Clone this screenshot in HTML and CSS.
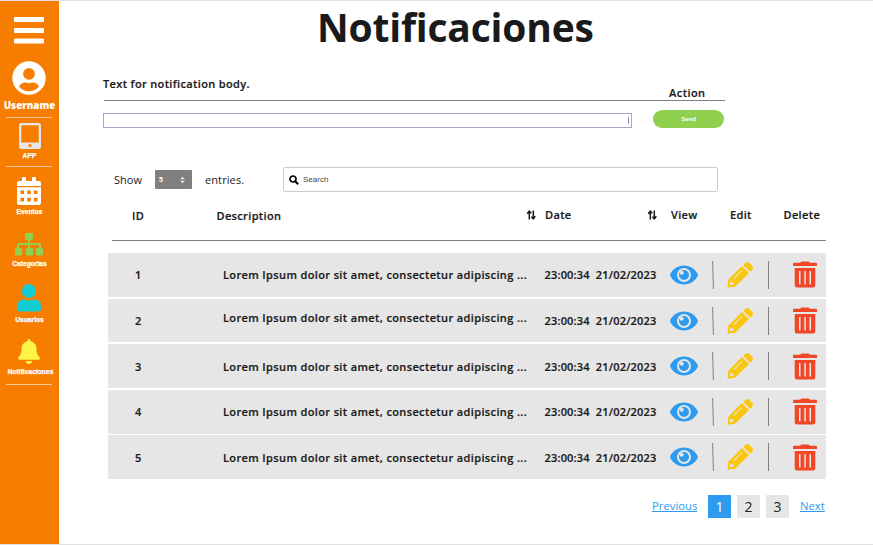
FILE: index.html
```html
<!DOCTYPE html>
<html lang="es">
<head>
<meta charset="utf-8">
<title>Notificaciones</title>
<link rel="stylesheet" href="styles.css">
</head>
<body>
<svg class="defs" width="0" height="0">
  <symbol id="eye" viewBox="0 0 28 20"><path fill="#2d9bf0" d="M14 .4C7.500 .4 2.500 4.500 .4 8.800a2.400 2.400 0 0 0 0 2.300C2.500 15.500 7.500 19.600 14 19.600s11.500-4.100 13.600-8.500a2.400 2.400 0 0 0 0-2.300C25.500 4.500 20.500 .4 14 .4z"/><circle cx="14" cy="10" r="6" fill="#2d9bf0" stroke="#e6e6e6" stroke-width="2"/><circle cx="11.800" cy="7.800" r="2" fill="#e6e6e6"/></symbol>
  <symbol id="pencil" viewBox="0 0 26 26"><path fill="#fac710" fill-rule="evenodd" d="M14.900 4 22 11.100 8.100 24.800.5 25.800 1.300 17.700zM16.300 2.900l1.900-1.900c1.200-1.200 3-1.200 4.200 0l2.700 2.700c1.200 1.200 1.200 3 0 4.200l-1.900 1.900zM3.500 19.300l-.8 4 3.900-.7v-2h-2zM7.100 16.900l8.300-8.300-.7-.7-8.300 8.300z"/></symbol>
  <symbol id="trash" viewBox="0 0 24 27"><path fill="#f24726" fill-rule="evenodd" d="M1 1.700h6L8.500.5h7L17 1.700h6a1 1 0 0 1 1 1v2.200H0V2.700a1 1 0 0 1 1-1zM1.700 7h20.600v17a2.500 2.500 0 0 1-2.500 2.500H4.200A2.500 2.500 0 0 1 1.700 24zM6 10v13.500h1.500V10zm5.300 0v13.500h1.500V10zm5.200 0v13.500H18V10z"/></symbol>
  <symbol id="sort" viewBox="0 0 10 10"><path d="M3.300 9.500V1.500M1.200 3.700 3.300 1.200 5.300 3.300M7.300 .5v8M5.300 6.700l2 2.100 2-2.500" fill="none" stroke="#1a1a1a" stroke-width="1.500"/></symbol>
</svg>
<div class="app">
  <nav class="sidebar">
    <svg class="menu" viewBox="0 0 30 27"><path fill="#fff" d="M1 0h28a1 1 0 0 1 1 1v3a1 1 0 0 1-1 1H1a1 1 0 0 1-1-1V1a1 1 0 0 1 1-1zM1 11h28a1 1 0 0 1 1 1v3a1 1 0 0 1-1 1H1a1 1 0 0 1-1-1v-3a1 1 0 0 1 1-1zM1 21.500h28a1 1 0 0 1 1 1v3a1 1 0 0 1-1 1H1a1 1 0 0 1-1-1v-3a1 1 0 0 1 1-1z"/></svg>
    <svg class="avatar" viewBox="0 0 34 34"><circle cx="17" cy="17" r="16.700" fill="#fff"/><circle cx="17" cy="12.900" r="5.900" fill="#f77d00"/><path fill="#f77d00" d="M6.900 25.500c1.700-2.600 3.800-4 6.200-4 1.500 0 2.200.7 3.900.7s2.400-.7 3.900-.7c2.400 0 4.500 1.400 6.200 4-2.500 3.100-6 4.800-10.100 4.800s-7.600-1.700-10.100-4.800z"/></svg>
    <span class="username">Username</span>
    <hr class="rule">
    <a class="item app-item"><svg viewBox="0 0 22 26" width="22" height="26"><path fill="#e6e6e6" fill-rule="evenodd" d="M2.500 0h17A2.500 2.500 0 0 1 22 2.500v21a2.500 2.500 0 0 1-2.500 2.500h-17A2.500 2.500 0 0 1 0 23.500v-21A2.500 2.500 0 0 1 2.500 0zM2.300 2.300v17.200h17.400V2.300zM11 21a1.600 1.600 0 1 0 0 3.200 1.600 1.600 0 0 0 0-3.200z"/></svg><span>APP</span></a>
    <hr class="rule">
    <a class="item events"><svg viewBox="0 0 24 28" width="24" height="28"><path fill="#fff" fill-rule="evenodd" d="M5 1a1 1 0 0 1 1-1h2a1 1 0 0 1 1 1v3h6V1a1 1 0 0 1 1-1h2a1 1 0 0 1 1 1v3h3a2 2 0 0 1 2 2v3H0V6a2 2 0 0 1 2-2h3zM0 10.200h24V26a2 2 0 0 1-2 2H2a2 2 0 0 1-2-2zM3.500 13.500v3.600h3.600v-3.600zm6.700 0v3.600h3.600v-3.600zm6.700 0v3.600h3.600v-3.600zM3.500 20.800v3.600h3.600v-3.600zm6.700 0v3.600h3.600v-3.600zm6.700 0v3.600h3.600v-3.600z"/></svg><span>Eventos</span></a>
    <a class="item cats"><svg viewBox="0 0 28 23" width="28" height="23"><path fill="#8fd14f" d="M11 0h6a1 1 0 0 1 1 1v5a1 1 0 0 1-1 1h-2v3h9.500a1.500 1.500 0 0 1 1.500 1.500V15h1a1 1 0 0 1 1 1v5.500a1 1 0 0 1-1 1h-5a1 1 0 0 1-1-1V16a1 1 0 0 1 1-1h2v-3h-9v3h2a1 1 0 0 1 1 1v5.500a1 1 0 0 1-1 1h-5a1 1 0 0 1-1-1V16a1 1 0 0 1 1-1h1v-3H4v3h2a1 1 0 0 1 1 1v5.500a1 1 0 0 1-1 1H1a1 1 0 0 1-1-1V16a1 1 0 0 1 1-1h1v-3.500A1.500 1.500 0 0 1 3.500 10H13V7h-2a1 1 0 0 1-1-1V1a1 1 0 0 1 1-1z"/></svg><span>Categorias</span></a>
    <a class="item users"><svg viewBox="0 0 24 28" width="24" height="28"><circle cx="12" cy="7" r="7" fill="#12cdd4"/><path fill="#12cdd4" d="M6 15.500c2 0 3.500 1 6 1s4-1 6-1c4 0 6 3.500 6 7.500v1.500a3 3 0 0 1-3 3H3a3 3 0 0 1-3-3V23c0-4 2-7.500 6-7.500z"/></svg><span>Usuarios</span></a>
    <a class="item notif"><svg viewBox="0 0 22 25" width="22" height="25"><path fill="#fef445" d="M11 0c1 0 1.500.7 1.500 1.500v.8c3.500.7 6 3.500 6 7.500 0 4.500 1.200 6.500 2.900 8.200 1 1 .5 2.700-1 2.700H1.600c-1.500 0-2-1.700-1-2.700 1.700-1.700 2.900-3.700 2.900-8.200 0-4 2.500-6.800 6-7.500v-.8C9.500.7 10 0 11 0zM8 22h6a3 3 0 0 1-6 0z"/></svg><span>Notificaciones</span></a>
    <hr class="rule">
  </nav>
  <main class="main">
    <h1>Notificaciones</h1>
    <div class="compose-head"><span class="body-label">Text for notification body.</span><span class="action-label">Action</span></div>
    <div class="compose"><div class="input"><i></i></div><button class="send">Send</button></div>
    <div class="filters">
      <span class="show">Show</span>
      <div class="select"><span>5</span><svg viewBox="0 0 6 8" width="5" height="8"><path fill="#e6e6e6" d="M3 0l2.800 3.200H.2zM3 8L.2 4.800h5.600z"/></svg></div>
      <span class="entries">entries.</span>
      <div class="search"><svg viewBox="0 0 10 10" width="10" height="10"><circle cx="4" cy="4" r="3" fill="none" stroke="#000" stroke-width="1.700"/><path d="M6.200 6.200 9.200 9.200" stroke="#000" stroke-width="2"/></svg><span>Search</span></div>
    </div>
    <div class="thead">
      <span class="h-id">ID</span><span class="h-desc">Description</span><svg class="sort"><use href="#sort"/></svg><span class="h-date">Date</span><svg class="sort"><use href="#sort"/></svg><span class="h-view">View</span><span class="h-edit">Edit</span><span class="h-del">Delete</span>
    </div>
    <div class="rows">
      <div class="row"><span class="id">1</span><span class="desc">Lorem Ipsum dolor sit amet, consectetur adipiscing ...</span><span class="date">23:00:34&nbsp; 21/02/2023</span><svg class="eye"><use href="#eye"/></svg><svg class="sep" viewBox="0 0 2 28"><path d="M.6 0 1.400 28"/></svg><svg class="pencil"><use href="#pencil"/></svg><svg class="sep" viewBox="0 0 2 28"><path d="M1.500 0V28"/></svg><svg class="trash"><use href="#trash"/></svg></div>
      <div class="row raised"><span class="id">2</span><span class="desc">Lorem Ipsum dolor sit amet, consectetur adipiscing ...</span><span class="date">23:00:34&nbsp; 21/02/2023</span><svg class="eye"><use href="#eye"/></svg><svg class="sep" viewBox="0 0 2 28"><path d="M.6 0 1.400 28"/></svg><svg class="pencil"><use href="#pencil"/></svg><svg class="sep" viewBox="0 0 2 28"><path d="M1.500 0V28"/></svg><svg class="trash"><use href="#trash"/></svg></div>
      <div class="row"><span class="id">3</span><span class="desc">Lorem Ipsum dolor sit amet, consectetur adipiscing ...</span><span class="date">23:00:34&nbsp; 21/02/2023</span><svg class="eye"><use href="#eye"/></svg><svg class="sep" viewBox="0 0 2 28"><path d="M.6 0 1.400 28"/></svg><svg class="pencil"><use href="#pencil"/></svg><svg class="sep" viewBox="0 0 2 28"><path d="M1.500 0V28"/></svg><svg class="trash"><use href="#trash"/></svg></div>
      <div class="row"><span class="id">4</span><span class="desc">Lorem Ipsum dolor sit amet, consectetur adipiscing ...</span><span class="date">23:00:34&nbsp; 21/02/2023</span><svg class="eye"><use href="#eye"/></svg><svg class="sep" viewBox="0 0 2 28"><path d="M.6 0 1.400 28"/></svg><svg class="pencil"><use href="#pencil"/></svg><svg class="sep" viewBox="0 0 2 28"><path d="M1.500 0V28"/></svg><svg class="trash"><use href="#trash"/></svg></div>
      <div class="row"><span class="id">5</span><span class="desc">Lorem Ipsum dolor sit amet, consectetur adipiscing ...</span><span class="date">23:00:34&nbsp; 21/02/2023</span><svg class="eye"><use href="#eye"/></svg><svg class="sep" viewBox="0 0 2 28"><path d="M.6 0 1.400 28"/></svg><svg class="pencil"><use href="#pencil"/></svg><svg class="sep" viewBox="0 0 2 28"><path d="M1.500 0V28"/></svg><svg class="trash"><use href="#trash"/></svg></div>
    </div>
    <div class="pager"><a class="prev">Previous</a><b class="page active">1</b><b class="page">2</b><b class="page">3</b><a class="next">Next</a></div>
  </main>
</div>
</body>
</html>
```
FILE: styles.css
```css
* { box-sizing: border-box; }
body { margin: 0; background: #fff; color: #1a1a1a; font-family: "Open Sans", sans-serif; }
svg { display: block; flex: none; }
span, a { white-space: nowrap; flex: none; }
.defs { position: absolute; }
.app { display: flex; width: 873px; height: 545px; border-top: 1px solid #e2e2e2; border-bottom: 1px solid #e2e2e2; overflow: hidden; }
.sidebar { width: 59px; height: 544px; flex: none; background: #f77d00; display: flex; flex-direction: column; align-items: center; }
.menu { width: 30px; height: 27px; margin-top: 16px; margin-right: 1px; }
.avatar { width: 34px; height: 34px; margin-top: 17px; margin-right: 2px; }
.username { font-size: 9.800px; font-weight: 800; line-height: 14px; color: #fff; margin-top: 4px; }
.rule { width: 46px; height: 1px; border: 0; margin: 0 1px 0 0; background: #fbc592; flex: none; }
.username + .rule { margin-top: 4px; }
.item { display: flex; flex: none; flex-direction: column; align-items: center; font: bold 6.700px/8px "Liberation Sans", sans-serif; color: #fff; -webkit-text-stroke: .25px #fff; }
.item svg { margin-right: 1px; }
.app-item { height: 48px; padding-top: 5px; gap: 3px; }
.app-item svg { margin-right: 0; }
.events { height: 56px; padding-top: 10px; gap: 3px; }
.cats { height: 51px; padding-top: 10px; gap: 4px; }
.users { height: 55px; padding-top: 10px; gap: 4px; }
.notif { height: 55px; padding-top: 10px; gap: 4px; margin-left: 2px; }
.notif svg { margin-right: 3px; }
.main { flex: 1; display: flex; flex-direction: column; min-width: 0; }
h1 { margin: -1px 0 0 258px; font-size: 39px; font-weight: 700; line-height: 53px; height: 54px; letter-spacing: -.2px; white-space: nowrap; }
.compose-head { display: flex; width: 621px; height: 25px; margin: 22px 0 0 45px; border-bottom: 1px solid #808080; font-size: 11px; font-weight: 600; line-height: 15px; letter-spacing: .35px; -webkit-text-stroke: .2px #1a1a1a; }
.body-label { width: 566px; margin-left: -1px; }
.action-label { margin-top: 9px; letter-spacing: .45px; }
.compose { display: flex; height: 19px; margin: 9px 0 0 44px; gap: 21px; align-items: flex-start; }
.input { width: 529px; height: 15px; margin-top: 3px; border: 1px solid #a6a6d2; display: flex; justify-content: flex-end; padding: 3px 2px; }
.input i { width: 1px; background: #8c8ccc; }
.send { width: 71px; height: 18px; padding: 0; border: 0; border-radius: 9px; background: #8fd14f; color: #fff; font: bold 6px/18px "Liberation Sans", sans-serif; }
.filters { display: flex; align-items: center; height: 25px; margin: 38px 0 0 55px; font-size: 11px; }
.show { width: 41px; }
.select { width: 37px; height: 19px; border-radius: 1px; background: #808080; color: #fff; font: bold 7px "Liberation Sans", sans-serif; display: flex; align-items: center; justify-content: space-between; padding: 0 7px 0 4px; }
.entries { margin-left: 13px; width: 78px; letter-spacing: .1px; }
.search { width: 435px; height: 25px; border: 1px solid #ccc; border-radius: 2px; display: flex; align-items: center; gap: 4px; padding-left: 5px; font: 8px "Liberation Sans", sans-serif; color: #444; }
.thead { display: flex; align-items: center; width: 714px; height: 49px; margin: 0 0 12px 53px; padding: 0 0 2px 20px; border-bottom: 1px solid #808080; font-size: 11px; font-weight: 600; letter-spacing: .35px; -webkit-text-stroke: .2px #1a1a1a; }
.h-id { width: 84.500px; }
.h-desc { width: 309.500px; }
.sort { width: 10px; height: 10px; }
.h-date { width: 111px; padding-left: 9px; margin-top: -1px; }
.h-view { width: 73px; padding-left: 14px; margin-top: -1px; }
.h-edit { width: 53.500px; margin-top: -1px; }
.h-del { margin-top: -1px; }
.rows { display: flex; flex-direction: column; gap: 1.700px; width: 718px; margin-left: 49px; }
.row { display: flex; align-items: center; height: 43.900px; background: #e6e6e6; font-size: 11px; font-weight: 600; letter-spacing: .37px; -webkit-text-stroke: .2px #1a1a1a; }
.id { width: 88px; padding-left: 27px; }
.desc { width: 348.500px; padding-left: 27px; }
.raised .desc { margin-top: -6px; }
.date { width: 125.500px; letter-spacing: .18px; }
.eye { width: 28px; height: 20px; }
.sep { width: 2px; height: 28px; margin: 0 14px 0 13.500px; stroke: #808080; fill: none; stroke-width: 1; }
.pencil { width: 26px; height: 26px; margin: 0 1px 0 -1px; }
.trash { width: 24px; height: 27px; margin-left: 10px; }
.pager { display: flex; align-items: center; height: 24px; margin: 15px 0 0 593px; font-size: 11.300px; color: #2d9bf0; }
.pager a { text-decoration: underline; margin-top: -1px; }
.prev { width: 56px; }
.page { width: 23px; height: 23px; margin-right: 6px; background: #e6e6e6; color: #1a1a1a; font-size: 14px; font-weight: 400; line-height: 24px; text-align: center; }
.active { background: #2d9bf0; color: #fff; }
.next { margin-left: 5px; }
```
